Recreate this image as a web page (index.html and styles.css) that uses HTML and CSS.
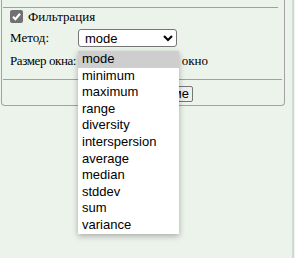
FILE: index.html
```html
<!DOCTYPE html>
<html lang="ru">
<head>
    <meta charset="UTF-8">
    <title>Фильтрация</title>
    <link rel="stylesheet" href="styles.css">
</head>
<body>
    <div class="panel">
        <div class="rule rule-top"></div>
        <div class="row row-check">
            <span class="check">
                <svg width="13" height="13" viewBox="0 0 13 13"><path d="M3 6.8 L5.4 9.2 L10 3.8" fill="none" stroke="#fff" stroke-width="2.2"/></svg>
            </span>
            <span class="label">Фильтрация</span>
        </div>
        <div class="row row-method">
            <span class="label field-name">Метод:</span>
            <select class="method">
                <option>mode</option>
            </select>
        </div>
        <div class="row row-size">
            <span class="label field-name tight">Размер окна:</span>
            <input class="size" type="text" value="">
            <span class="label wide">Круговое окно</span>
        </div>
        <div class="rule rule-bottom"></div>
        <div class="row row-button">
            <button class="apply">Найти на схеме</button>
        </div>

        <!-- открытый список select -->
        <div class="dropdown">
            <div class="option selected">mode</div>
            <div class="option">minimum</div>
            <div class="option">maximum</div>
            <div class="option">range</div>
            <div class="option">diversity</div>
            <div class="option">interspersion</div>
            <div class="option">average</div>
            <div class="option">median</div>
            <div class="option">stddev</div>
            <div class="option">sum</div>
            <div class="option">variance</div>
        </div>
    </div>
    <div class="edge"></div>
</body>
</html>
```

FILE: styles.css
```css
html, body {
    margin: 0;
    padding: 0;
    overflow: hidden;
    width: 100%;
    height: 100%;
    background-color: #ecf3eb;
    font-family: 'Liberation Serif', serif;
    font-size: 13px;
    color: #000;
}
body {
    display: flex;
    align-items: flex-start;
}
.panel {
    position: relative;
    box-sizing: border-box;
    width: 284px;
    height: 106px;
    margin-left: 1px;
    border: 1px solid #a3a3a3;
    border-top: none;
    border-radius: 0 0 4px 4px;
}
.rule {
    height: 1px;
    background: #a0a0a0;
    margin-left: 1px;
}
.rule-top {
    margin-top: 7px;
    width: 275px;
}
.rule-bottom {
    margin-top: 9px;
    width: 279px;
}
.row {
    display: flex;
    align-items: center;
    padding-left: 8px;
}
.label {
    white-space: nowrap;
    flex-shrink: 0;
}
.row-check {
    margin-top: 2px;
    height: 13px;
}
.check {
    width: 13px;
    height: 13px;
    border-radius: 2px;
    background: #717171;
    margin-right: 5px;
}
.check svg {
    display: block;
}
.row-method {
    margin-top: 6px;
    height: 18px;
}
.field-name {
    width: 68px;
}
.tight {
    letter-spacing: -0.4px;
}
.wide {
    word-spacing: 3px;
}
.method {
    box-sizing: border-box;
    width: 99px;
    height: 18px;
    padding: 0 0 0 2px;
    font-family: 'Liberation Sans', sans-serif;
    font-size: 13px;
    border: 1px solid #767676;
    border-radius: 3px;
    background: #fff;
}
.row-size {
    margin-top: 4px;
    height: 19px;
}
.size {
    box-sizing: border-box;
    width: 37px;
    height: 19px;
    margin: 0 9px 0 0;
    border: 1px solid #767676;
    border-radius: 2px;
}
.row-button {
    margin-top: 6px;
    padding-left: 88px;
}
.apply {
    height: 16px;
    padding: 0 3px;
    font-family: 'Liberation Sans', sans-serif;
    font-size: 13px;
    line-height: 14px;
    border: 1px solid #767676;
    border-radius: 2px;
    background: #efefef;
    color: #000;
}
.dropdown {
    position: absolute;
    left: 76px;
    top: 51px;
    width: 101px;
    background: #fff;
    box-shadow: 0 2px 6px rgba(0, 0, 0, 0.3);
    font-family: 'Liberation Sans', sans-serif;
    font-size: 13px;
    z-index: 2;
}
.option {
    height: 16.6px;
    line-height: 16.6px;
    padding-left: 4px;
    white-space: nowrap;
}
.option.selected {
    background: #cecece;
}
.edge {
    width: 2px;
    height: 100%;
    margin-left: 7px;
    background: #cfd9da;
}
```
